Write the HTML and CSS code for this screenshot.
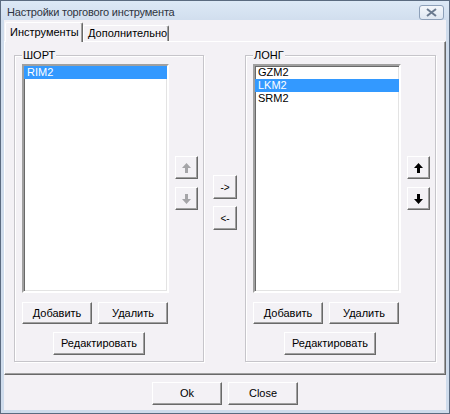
FILE: index.html
```html
<!DOCTYPE html>
<html>
<head>
<meta charset="utf-8">
<link rel="stylesheet" href="styles.css">
</head>
<body>
<div class="window">
  <div class="titlebar">
    <span class="title">Настройки торгового инструмента</span>
    <span class="close">
      <svg width="11" height="9" viewBox="0 0 11 9"><path d="M1 1 L10 8 M10 1 L1 8" stroke="#6b7b90" stroke-width="2" fill="none"/></svg>
    </span>
  </div>
  <div class="client">
    <div class="tabs">
      <div class="tab active">Инструменты</div>
      <div class="tab">Дополнительно</div>
    </div>
    <div class="panel">
      <div class="group">
        <div class="legend">ШОРТ</div>
        <div class="group-body">
          <div class="list">
            <div class="item selected">RIM2</div>
          </div>
          <div class="side">
            <div class="btn sq disabled"><svg width="9" height="10" viewBox="0 0 9 10"><path d="M4.5 0 L9 5 L6 5 L6 10 L3 10 L3 5 L0 5 Z"/></svg></div>
            <div class="btn sq disabled"><svg width="9" height="10" viewBox="0 0 9 10"><path d="M4.5 10 L9 5 L6 5 L6 0 L3 0 L3 5 L0 5 Z"/></svg></div>
          </div>
        </div>
        <div class="row">
          <div class="btn w70">Добавить</div>
          <div class="btn w70">Удалить</div>
        </div>
        <div class="row edit">
          <div class="btn w92">Редактировать</div>
        </div>
      </div>
      <div class="middle">
        <div class="btn mv">-&gt;</div>
        <div class="btn mv">&lt;-</div>
      </div>
      <div class="group">
        <div class="legend">ЛОНГ</div>
        <div class="group-body">
          <div class="list">
            <div class="item">GZM2</div>
            <div class="item selected">LKM2</div>
            <div class="item">SRM2</div>
          </div>
          <div class="side">
            <div class="btn sq"><svg width="9" height="10" viewBox="0 0 9 10"><path d="M4.5 0 L9 5 L6 5 L6 10 L3 10 L3 5 L0 5 Z"/></svg></div>
            <div class="btn sq"><svg width="9" height="10" viewBox="0 0 9 10"><path d="M4.5 10 L9 5 L6 5 L6 0 L3 0 L3 5 L0 5 Z"/></svg></div>
          </div>
        </div>
        <div class="row">
          <div class="btn w70">Добавить</div>
          <div class="btn w70">Удалить</div>
        </div>
        <div class="row edit">
          <div class="btn w92">Редактировать</div>
        </div>
      </div>
    </div>
    <div class="footer">
      <div class="btn ft">Ok</div>
      <div class="btn ft">Close</div>
    </div>
  </div>
</div>
</body>
</html>
```
FILE: styles.css
```css
* { box-sizing: border-box; }
body {
  margin: 0;
  font-family: "Liberation Sans", Arial, sans-serif;
  font-size: 11px;
  color: #000;
}
.window {
  width: 450px;
  height: 414px;
  border: 1px solid #5b6b80;
  background: #cfdcec;
  padding: 0 3px 3px;
  display: flex;
  flex-direction: column;
}
.titlebar {
  height: 19px;
  margin: 0 -3px;
  padding: 0 5px 0 6px;
  display: flex;
  align-items: center;
  justify-content: space-between;
  background: linear-gradient(#dde9f6, #d1deee);
}
.title {
  font-family: "Liberation Sans", Arial, sans-serif;
  font-size: 11px;
  letter-spacing: -0.2px;
  color: #2e3440;
  padding-top: 2px;
}
.close {
  width: 25px;
  height: 15px;
  margin-top: 3px;
  border: 1px solid #8da0b9;
  border-radius: 3px;
  background: linear-gradient(#f4f7fb, #dfe7f2);
  display: flex;
  align-items: center;
  justify-content: center;
}
.client {
  flex: 1;
  background: #f3f1f5;
  display: flex;
  flex-direction: column;
}
.tabs {
  height: 21px;
  display: flex;
  align-items: flex-end;
  padding-left: 1px;
}
.tab {
  height: 16px;
  width: 86px;
  border: 1px solid;
  border-bottom: none;
  border-color: #fff #696969 #696969 #fff;
  box-shadow: inset -1px 0 #a0a0a0;
  border-radius: 2px 2px 0 0;
  padding: 1px 0 0 4px;
  line-height: 13px;
}
.tab.active {
  width: 78px;
  height: 20px;
  margin-bottom: -1px;
  padding-top: 3px;
  background: #f3f1f5;
  position: relative;
  z-index: 1;
}
.panel {
  height: 334px;
  border: 1px solid;
  border-color: #fff #696969 #696969 #fff;
  box-shadow: inset -1px -1px #a0a0a0;
  display: flex;
  align-items: flex-start;
  padding: 13px 0 0 9px;
}
.group {
  width: 190px;
  height: 307px;
  border: 1px solid #c6c5ca;
  box-shadow: inset 1px 1px #fff, 1px 1px #fff;
  padding: 0 5px 6px 7px;
  display: flex;
  flex-direction: column;
}
.group + .middle + .group { width: 191px; }
.legend {
  align-self: flex-start;
  margin-top: -7px;
  height: 13px;
  line-height: 13px;
  padding: 0 1px;
  background: #f3f1f5;
}
.group-body {
  display: flex;
  margin-top: 2px;
}
.list {
  width: 148px;
  height: 229px;
  background: #fff;
  border: 2px solid;
  border-color: #a0a0a0 #fff #fff #a0a0a0;
  box-shadow: inset 1px 1px #696969, inset -1px -1px #e3e3e3;
}
.item {
  height: 13px;
  line-height: 13px;
  padding-left: 3px;
}
.item.selected {
  background: #3399ff;
  color: #fff;
}
.side {
  margin-left: 6px;
  padding-top: 92px;
  display: flex;
  flex-direction: column;
  gap: 8px;
}
.btn {
  display: flex;
  align-items: center;
  justify-content: center;
  background: #f3f1f5;
  border: 1px solid;
  border-color: #fff #696969 #696969 #fff;
  box-shadow: inset -1px -1px #a0a0a0;
  line-height: 13px;
}
.sq {
  width: 23px;
  height: 23px;
}
.sq svg { fill: #000; }
.sq.disabled svg { fill: #a5a5a8; }
.row {
  display: flex;
  gap: 6px;
  margin-top: 9px;
}
.row.edit {
  margin-top: 8px;
  padding-left: 31px;
}
.w70 { width: 70px; height: 22px; }
.w92 { width: 92px; height: 23px; }
.middle {
  width: 41px;
  padding: 120px 0 0 9px;
  display: flex;
  flex-direction: column;
  gap: 7px;
}
.mv {
  width: 24px;
  height: 24px;
  font-size: 10px;
}
.footer {
  flex: 1;
  display: flex;
  gap: 6px;
  padding: 7px 0 0 148px;
}
.ft {
  width: 70px;
  height: 23px;
}
```
